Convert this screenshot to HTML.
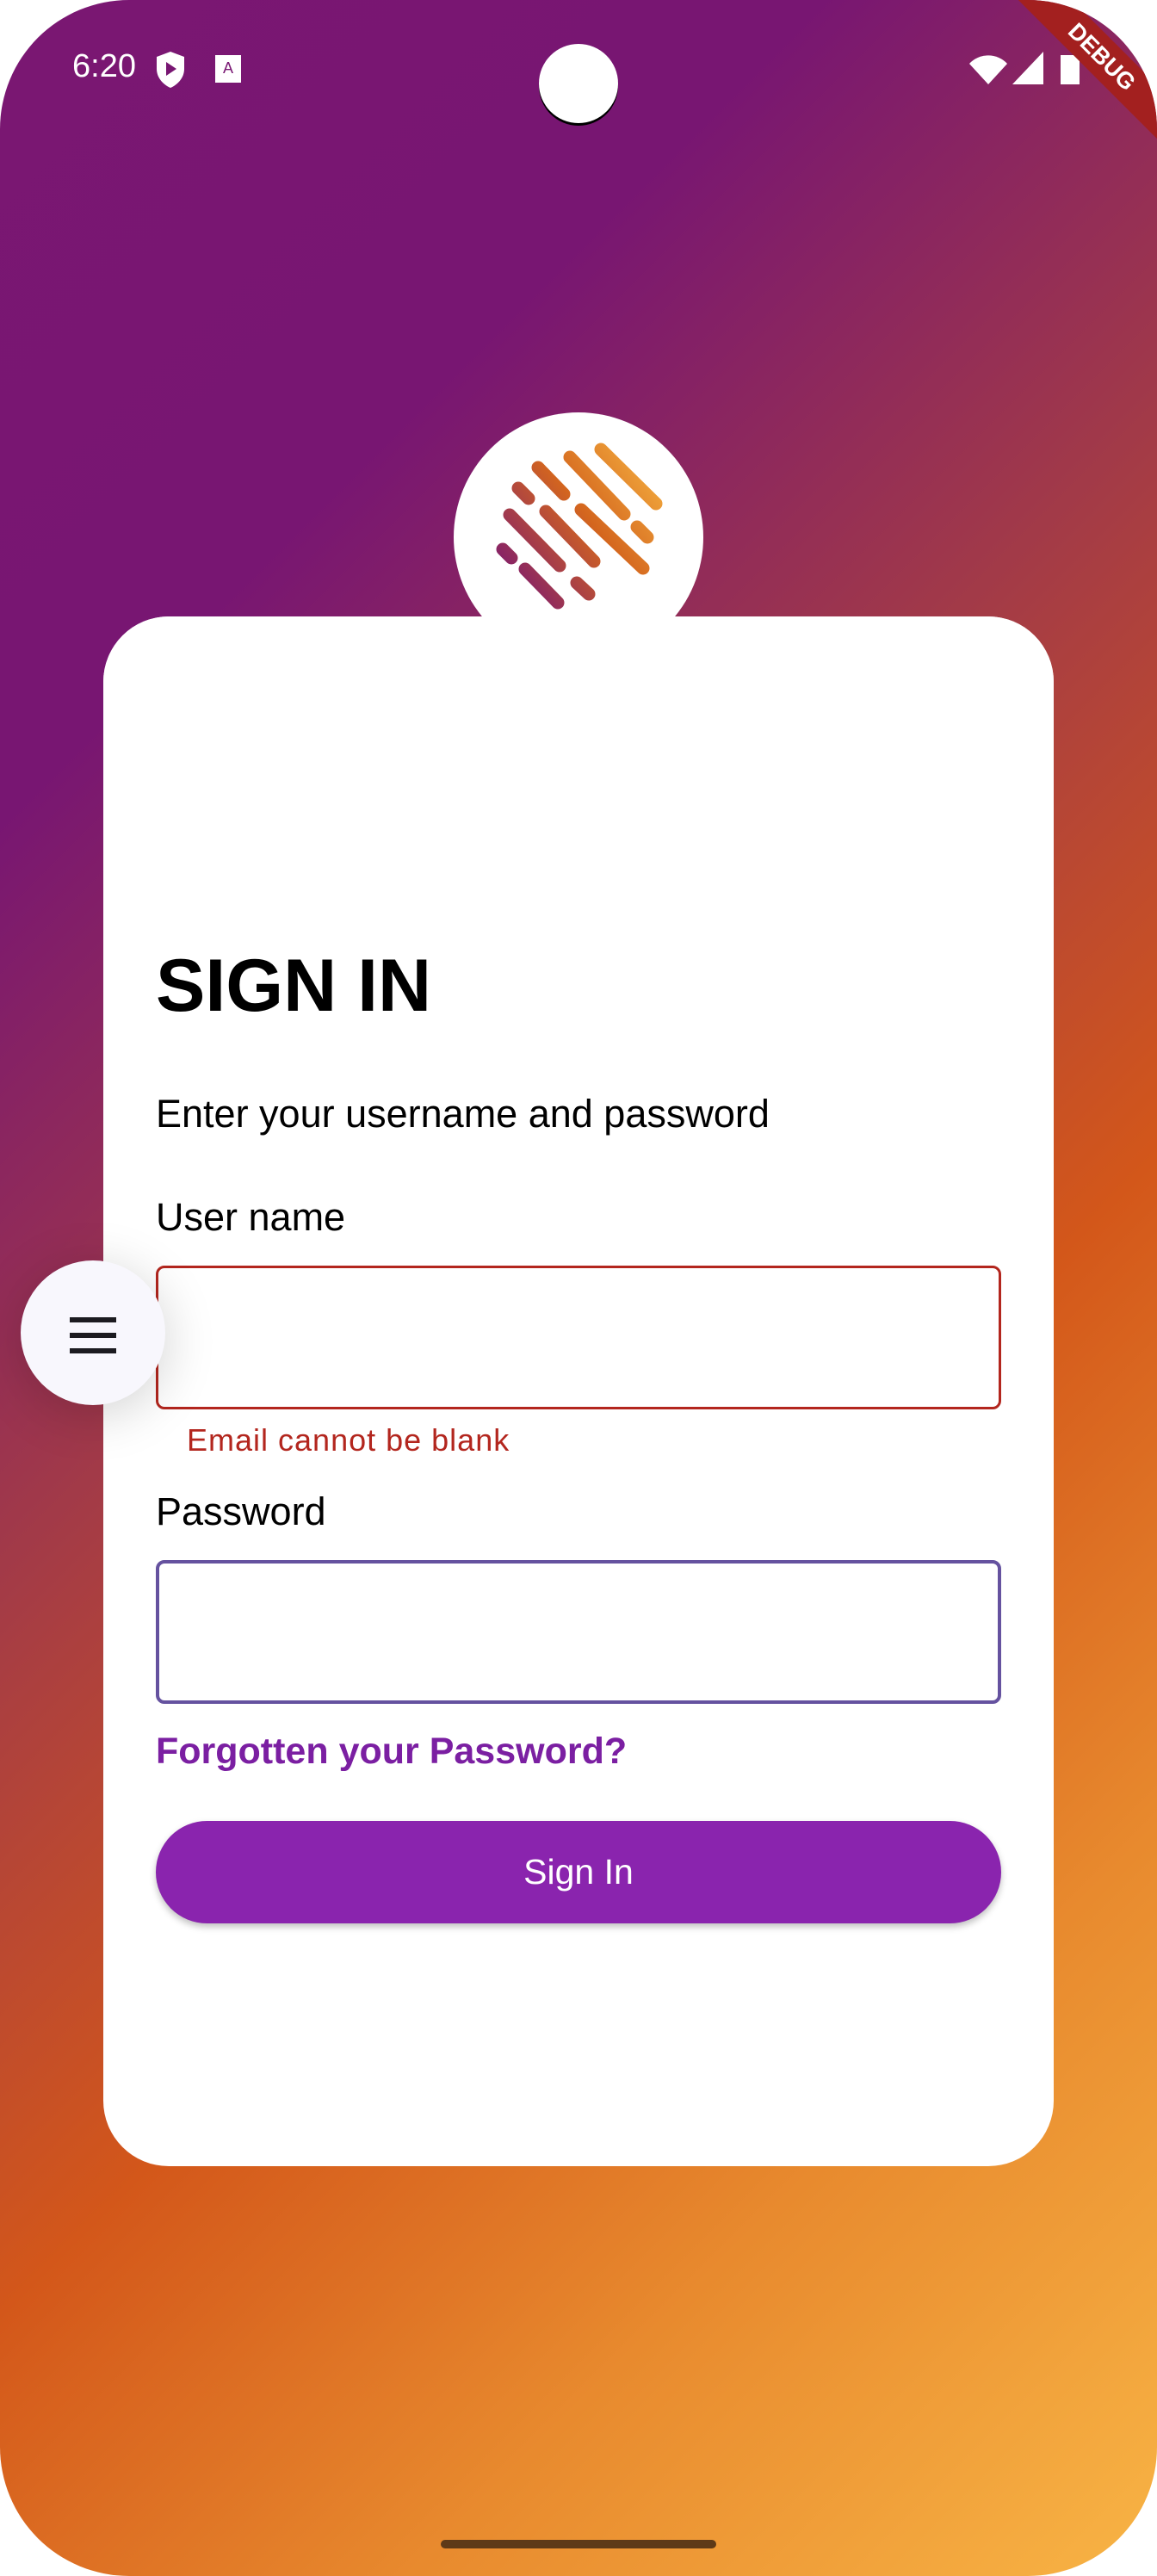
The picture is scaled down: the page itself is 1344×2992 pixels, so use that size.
<!DOCTYPE html>
<html><head><meta charset="utf-8"><style>
html,body{margin:0;padding:0;background:#fff;}
body{width:1344px;height:2992px;position:relative;overflow:hidden;font-family:"Liberation Sans",Roboto,sans-serif;}
.screen{position:absolute;left:0;top:0;width:1344px;height:2992px;border-radius:150px;overflow:hidden;
background:linear-gradient(135deg,#7a1772 0%,#781672 22%,#a23a48 42%,#d3571a 62%,#e88a2e 80%,#f8b445 100%);}
.card{position:absolute;left:120px;top:716px;width:1104px;height:1800px;background:#fff;border-radius:76px;}
.t{position:absolute;color:#000;white-space:nowrap;}
.inp{position:absolute;left:181px;width:982px;box-sizing:border-box;border-radius:10px;}
</style></head><body>
<div class="screen">
 <div class="t" style="left:84px;top:56px;font-size:38px;color:#fff;">6:20</div>
 <svg style="position:absolute;left:180px;top:60px" width="36" height="42" viewBox="0 0 36 42"><path d="M18 0L34 6V20C34 30 27 38 18 42C9 38 2 30 2 20V6Z" fill="#fff"/><path d="M13 12L25 20L13 28Z" fill="#781672"/></svg>
 <svg style="position:absolute;left:250px;top:64px" width="30" height="32"><rect width="30" height="32" fill="#fff"/><text x="15" y="21" font-size="18" text-anchor="middle" fill="#781672" font-family="Liberation Sans">A</text></svg>
 <div style="position:absolute;left:626px;top:51px;width:92px;height:92px;border-radius:50%;background:#fff;box-shadow:0 3px 0 #000"></div>
 <svg style="position:absolute;left:1126px;top:60px" width="140" height="40"><path d="M0 14A30 30 0 0 1 44 14L22 38Z" fill="#fff"/><path d="M86 0V38H50Z" fill="#fff"/><rect x="106" y="4" width="22" height="34" fill="#fff"/></svg>
 <div style="position:absolute;right:-86px;top:44px;width:300px;height:44px;background:#a3201f;transform:rotate(45deg);transform-origin:center;color:#fff;font-weight:bold;font-size:27px;text-align:center;line-height:44px;">DEBUG</div>

 <div class="card"></div>
 <div style="position:absolute;left:527px;top:479px;width:290px;height:290px;border-radius:50%;background:#fff;"></div>
 <div style="position:absolute;left:120px;top:716px;width:1104px;height:80px;background:#fff;border-radius:76px 76px 0 0"></div>
 <svg style="position:absolute;left:0;top:0" width="1344" height="800">
  <defs><linearGradient id="g" x1="580" y1="680" x2="770" y2="540" gradientUnits="userSpaceOnUse"><stop offset="0" stop-color="#7a1772"/><stop offset="0.55" stop-color="#d4661e"/><stop offset="1" stop-color="#f5b040"/></linearGradient></defs>
  <g stroke="url(#g)" stroke-width="15" stroke-linecap="round" fill="none">
   <path d="M602 567L614 579"/><path d="M625 543L655 574"/><path d="M662 531L725 597"/><path d="M698 522L762 585"/>
   <path d="M592 598L650 657"/><path d="M634 594L690 652"/><path d="M675 592L747 660"/>
   <path d="M584 638L594 648"/><path d="M610 661L648 700"/><path d="M670 677L684 690"/><path d="M740 612L752 624"/>
  </g>
 </svg>

 <div class="t" style="left:181px;top:1096px;font-size:86px;font-weight:bold;">SIGN IN</div>
 <div class="t" style="left:181px;top:1268px;font-size:45px;">Enter your username and password</div>
 <div class="t" style="left:181px;top:1388px;font-size:45px;">User name</div>
 <div class="inp" style="top:1470px;height:167px;border:3px solid #b3261e;"></div>
 <div class="t" style="left:217px;top:1652px;font-size:36px;color:#b3261e;letter-spacing:1px;">Email cannot be blank</div>
 <div class="t" style="left:181px;top:1730px;font-size:45px;">Password</div>
 <div class="inp" style="top:1812px;height:167px;border:4px solid #65529f;"></div>
 <div class="t" style="left:181px;top:2010px;font-size:43px;font-weight:bold;color:#7b1fa2;">Forgotten your Password?</div>
 <div style="position:absolute;left:181px;top:2115px;width:982px;height:119px;border-radius:60px;background:#8a24ae;box-shadow:0 4px 8px rgba(0,0,0,.25);color:#fff;font-size:41px;text-align:center;line-height:119px;">Sign In</div>

 <div style="position:absolute;left:24px;top:1464px;width:168px;height:168px;border-radius:50%;background:#f8f7fd;box-shadow:0 10px 60px rgba(0,0,0,.18);"></div>
 <div style="position:absolute;left:81px;top:1530px;width:54px;height:6px;background:#1c1b20;box-shadow:0 18px 0 #1c1b20,0 36px 0 #1c1b20;"></div>

 <div style="position:absolute;left:512px;top:2950px;width:320px;height:10px;border-radius:5px;background:#5e3a18;"></div>
</div>
</body></html>
